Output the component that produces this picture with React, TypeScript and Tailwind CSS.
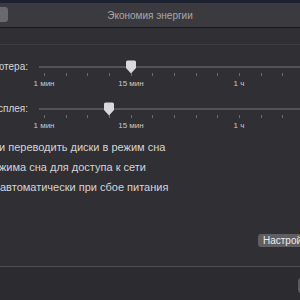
const TICKS = Array.from({ length: 13 }, (_, i) => 5 + i * 21.67);

interface SliderProps {
  label: string;
  thumb: number; // thumb centre, px from slider start
}

const Slider = ({ label, thumb }: SliderProps) => {
  return (
    <div className="flex h-[32px]">
      {/* Label, cut off at the left edge */}
      <div className="w-[28px] shrink-0 flex justify-end pt-[3px]">
        <span className="whitespace-nowrap text-[10px] leading-[12px] text-[#d6d6d8]">{label}</span>
      </div>
      <div className="relative flex-1 ml-[11px]">
        {/* Track */}
        <div className="absolute left-0 right-0 top-[8px] h-[2px] bg-[#535257]" />
        {/* Ticks */}
        {TICKS.map((x) => (
          <div
            key={x}
            className="absolute top-[15px] h-[3px] w-px bg-[#6b6a6f]"
            style={{ left: x }}
          />
        ))}
        {/* Tick labels */}
        <span className="absolute top-[21px] -translate-x-1/2 whitespace-nowrap text-[8px] leading-[10px] text-[#c9c9cc]" style={{ left: 5 }}>
          1 мин
        </span>
        <span className="absolute top-[21px] -translate-x-1/2 whitespace-nowrap text-[8px] leading-[10px] text-[#c9c9cc]" style={{ left: 92 }}>
          15 мин
        </span>
        <span className="absolute top-[21px] -translate-x-1/2 whitespace-nowrap text-[8px] leading-[10px] text-[#c9c9cc]" style={{ left: 200 }}>
          1 ч
        </span>
        {/* Thumb */}
        <svg
          width="11"
          height="14"
          viewBox="0 0 11 14"
          className="absolute top-[2px] -translate-x-1/2"
          style={{ left: thumb }}
        >
          <path
            d="M2 0.5 H9 Q10.5 0.5 10.5 2 V8 L5.5 13.5 L0.5 8 V2 Q0.5 0.5 2 0.5 Z"
            fill="#d9d9db"
          />
        </svg>
      </div>
    </div>
  );
};

export default function App() {
  return (
    <div className="w-[300px] h-[300px] overflow-hidden flex flex-col bg-[#302f34] font-['Liberation_Sans',Arial,sans-serif]">
      {/* Desktop strip */}
      <div className="h-[3px] bg-[#1d2231]" />

      {/* Title bar */}
      <div className="relative h-[25px] shrink-0 flex items-center justify-center bg-[#3b3a3f] border-b border-[#19181c]">
        <div className="absolute left-[-8px] top-[4px] w-[16px] h-[15px] rounded-[3px] bg-[#6a696e]" />
        <span className="text-[10px] text-[#a8a7ac]">Экономия энергии</span>
      </div>

      {/* Settings */}
      <div className="flex-1 flex flex-col">
        <div className="mt-[16px] h-px bg-[#3c3b40]" />

        <div className="mt-[13px]">
          <Slider label="Режим сна компьютера:" thumb={92} />
        </div>
        <div className="mt-[10px]">
          <Slider label="Режим сна дисплея:" thumb={70} />
        </div>

        <div className="mt-[9px] flex flex-col gap-[7px] text-[11px] leading-[13px] text-[#d4d4d6] whitespace-nowrap">
          <span className="ml-[-1px]">и переводить диски в режим сна</span>
          <span className="ml-[-1px]">жима сна для доступа к сети</span>
          <span className="ml-[0px]">автоматически при сбое питания</span>
        </div>

        <div className="mt-[40px] flex justify-end">
          <div className="mr-[-22px] h-[13px] pl-[5px] pr-[10px] rounded-[3px] bg-[#5f5e63] flex items-center">
            <span className="text-[10px] leading-[12px] text-[#ececee]">Настройки</span>
          </div>
        </div>
      </div>

      {/* Bottom bar */}
      <div className="h-[34px] shrink-0 border-t border-[#4e4d52] bg-[#2c2b30] flex justify-end pt-[11px]">
        <div className="mr-[-6px] w-[8px] h-[15px] rounded-[3px] bg-[#5a595e]" />
      </div>
    </div>
  );
}
